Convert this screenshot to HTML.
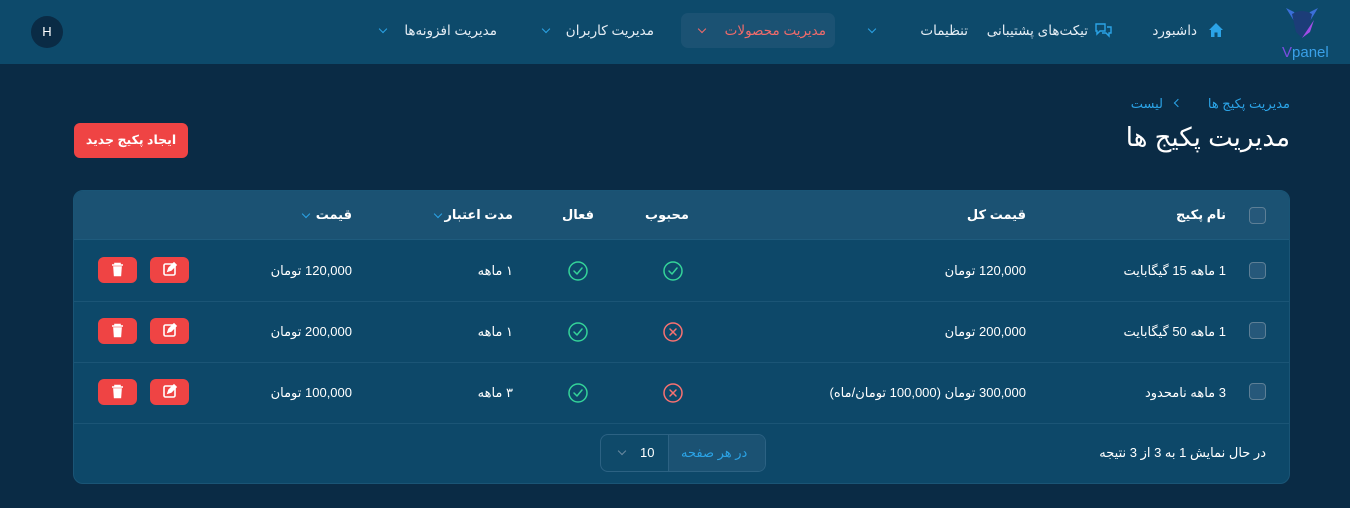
<!DOCTYPE html>
<html lang="fa" dir="rtl"><head><meta charset="utf-8"><style>
*{margin:0;padding:0;box-sizing:border-box}
body{width:1350px;height:508px;background:#0a2b45;font-family:"Liberation Sans","DejaVu Sans",sans-serif;color:#fff;position:relative;overflow:hidden;font-size:13px}
.a{position:absolute;white-space:nowrap}
.nav{position:absolute;left:0;top:0;width:1350px;height:64px;background:#0d4a6b}
.ni{position:absolute;top:13px;height:35px;line-height:35px;font-size:13.5px;color:#e6eef5;white-space:nowrap}
.chev{display:inline-block;width:6px;height:6px;border-right:1.5px solid #2ba3e6;border-bottom:1.5px solid #2ba3e6;transform:rotate(45deg)}
.card{position:absolute;left:73px;top:190px;width:1217px;height:294px;background:#0d4869;border-radius:10px;overflow:hidden;border:1px solid #1a5576}
.hd{position:absolute;left:0;top:0;width:100%;height:49px;background:#1b5273;border-bottom:1px solid #1f5b7d}
.rl{position:absolute;left:0;width:100%;height:1px;background:#1b5576}
.cb{position:absolute;width:17px;height:17px;border:1px solid #5d7f96;border-radius:4px;background:#26587a}
.btn{position:absolute;width:39px;height:26px;background:#ef4444;border-radius:6px}
.t{position:absolute;font-size:13px;color:#fff;white-space:nowrap}
</style></head><body>
<div class="nav">
 <svg class="a" style="left:1280px;top:4px" width="44" height="42" viewBox="0 0 44 42"><path d="M6 4 L22 30 L38 4 L30 8 L22 22 L14 8Z" fill="#3b6fd8"/><path d="M12 10 Q22 4 32 10 L28 28 L22 34 L16 28Z" fill="#1c3d78"/><path d="M22 34 L34 16 L30 28Z" fill="#a24ce8"/></svg>
 <div class="a" style="left:1282px;top:44px;font-size:15px;color:#7b4de0">V<span style="color:#3aa0e8">panel</span></div>
 <div class="ni" style="right:153px">داشبورد</div>
 <svg class="a" style="left:1208px;top:22px" width="16" height="16" viewBox="0 0 16 16"><path d="M8 1 L1 8 H3 V15 H6.5 V10.5 H9.5 V15 H13 V8 H15Z" fill="#2ba3e6"/></svg>
 <div class="ni" style="right:262px">تیکت‌های پشتیبانی</div>
 <svg class="a" style="left:1094px;top:22px" width="19" height="18" viewBox="0 0 19 18" fill="none" stroke="#2ba3e6" stroke-width="1.4"><path d="M2 2h9v7H6l-3 3V9H2z"/><path d="M8 11h4l3 3v-3h2V5h-4"/></svg>
 <div class="a" style="left:681px;top:13px;width:154px;height:35px;background:#1b5273;border-radius:7px"></div>
 <div class="ni" style="right:524px;color:#f06b6b">مدیریت محصولات</div>
 <span class="a chev" style="left:699px;top:26px;border-color:#f06b6b"></span>
 <div class="ni" style="right:382px">تنظیمات</div>
 <span class="a chev" style="left:869px;top:26px"></span>
 <div class="ni" style="right:696px">مدیریت کاربران</div>
 <span class="a chev" style="left:543px;top:26px"></span>
 <div class="ni" style="right:853px">مدیریت افزونه‌ها</div>
 <span class="a chev" style="left:380px;top:26px"></span>
 <div class="a" style="left:31px;top:16px;width:32px;height:32px;border-radius:50%;background:#0a2b45;text-align:center;line-height:32px;font-size:13px">H</div>
</div>
<div class="a" style="right:60px;top:96px;font-size:13px;color:#2ba3e6">مدیریت پکیج ها</div>
<span class="a chev" style="left:1175px;top:100px;transform:rotate(135deg)"></span>
<div class="a" style="right:187px;top:96px;font-size:13px;color:#2ba3e6">لیست</div>
<div class="a" style="right:60px;top:122px;font-size:26px;color:#fff">مدیریت پکیج ها</div>
<div class="a" style="left:74px;top:123px;width:114px;height:35px;background:#ef4444;border-radius:6px;text-align:center;line-height:35px;font-size:12.5px;font-weight:bold">ایجاد پکیج جدید</div>
<div class="card">
 <div class="hd"></div>
 <div class="cb" style="left:1175px;top:16px"></div>
 <div class="t" style="right:63px;top:16px;font-weight:bold">نام پکیج</div>
 <div class="t" style="right:263px;top:16px;font-weight:bold">قیمت کل</div>
 <div class="t" style="left:571px;top:16px;font-weight:bold">محبوب</div>
 <div class="t" style="left:488px;top:16px;font-weight:bold">فعال</div>
 <div class="t" style="right:776px;top:16px;font-weight:bold">مدت اعتبار</div>
 <span class="a chev" style="left:361px;top:20px"></span>
 <div class="t" style="right:937px;top:16px;font-weight:bold">قیمت</div>
 <span class="a chev" style="left:229px;top:20px"></span>

 <div class="rl" style="top:110px"></div><div class="rl" style="top:171px"></div><div class="rl" style="top:232px"></div>

 <div class="cb" style="left:1175px;top:71px"></div>
 <div class="t" style="right:63px;top:72px">1 ماهه 15 گیگابایت</div>
 <div class="t" style="right:263px;top:72px">120,000 تومان</div>
 <div class="t" style="right:776px;top:72px">۱ ماهه</div>
 <div class="t" style="right:937px;top:72px">120,000 تومان</div>
 <div class="cb" style="left:1175px;top:131px"></div>
 <div class="t" style="right:63px;top:133px">1 ماهه 50 گیگابایت</div>
 <div class="t" style="right:263px;top:133px">200,000 تومان</div>
 <div class="t" style="right:776px;top:133px">۱ ماهه</div>
 <div class="t" style="right:937px;top:133px">200,000 تومان</div>
 <div class="cb" style="left:1175px;top:192px"></div>
 <div class="t" style="right:63px;top:194px">3 ماهه نامحدود</div>
 <div class="t" style="right:263px;top:194px">300,000 تومان (100,000 تومان/ماه)</div>
 <div class="t" style="right:776px;top:194px">۳ ماهه</div>
 <div class="t" style="right:937px;top:194px">100,000 تومان</div>

 <svg class="a" style="left:0;top:0" width="1217" height="294">
  <g fill="none" stroke-width="1.5" stroke-linecap="round" stroke-linejoin="round">
   <g stroke="#34d399"><circle cx="599" cy="80" r="9"/><path d="M595 80l3 3 5-6"/>
   <circle cx="504" cy="80" r="9"/><path d="M500 80l3 3 5-6"/>
   <circle cx="504" cy="141" r="9"/><path d="M500 141l3 3 5-6"/>
   <circle cx="504" cy="202" r="9"/><path d="M500 202l3 3 5-6"/></g>
   <g stroke="#f87171"><circle cx="599" cy="141" r="9"/><path d="M596 138l6 6M602 138l-6 6"/>
   <circle cx="599" cy="202" r="9"/><path d="M596 199l6 6M602 199l-6 6"/></g>
  </g>
 </svg>
 <div class="btn" style="left:76px;top:66px"></div><div class="btn" style="left:24px;top:66px"></div>
 <div class="btn" style="left:76px;top:127px"></div><div class="btn" style="left:24px;top:127px"></div>
 <div class="btn" style="left:76px;top:188px"></div><div class="btn" style="left:24px;top:188px"></div>
 <svg class="a" style="left:0;top:0" width="200" height="294" fill="none" stroke="#fff" stroke-width="1.6">
  <g id="ic"><rect x="90" y="73" width="11" height="11" rx="1.5"/><path d="M94 80l1 -3 5-5 2 2-5 5z" fill="#fff"/>
  <path d="M38 74h11M41 74v-1.5h5V74M40 76h7l-0.6 8.5h-5.8z" fill="#fff"/></g>
  <use href="#ic" y="61"/><use href="#ic" y="122"/>
 </svg>

 <div class="t" style="right:23px;top:254px">در حال نمایش 1 به 3 از 3 نتیجه</div>
 <div class="a" style="left:526px;top:243px;width:166px;height:38px;border:1px solid #2c6283;border-radius:8px;background:#0f4a6a"></div>
 <div class="a" style="left:594px;top:244px;width:97px;height:36px;background:#1b5273;border-radius:0 7px 7px 0;border-left:1px solid #2c6283"></div>
 <div class="t" style="left:607px;top:254px;color:#2ba3e6">در هر صفحه</div>
 <div class="t" style="left:566px;top:254px">10</div>
 <span class="a chev" style="left:545px;top:257px;border-color:#6b8aa0"></span>
</div>
</body></html>
